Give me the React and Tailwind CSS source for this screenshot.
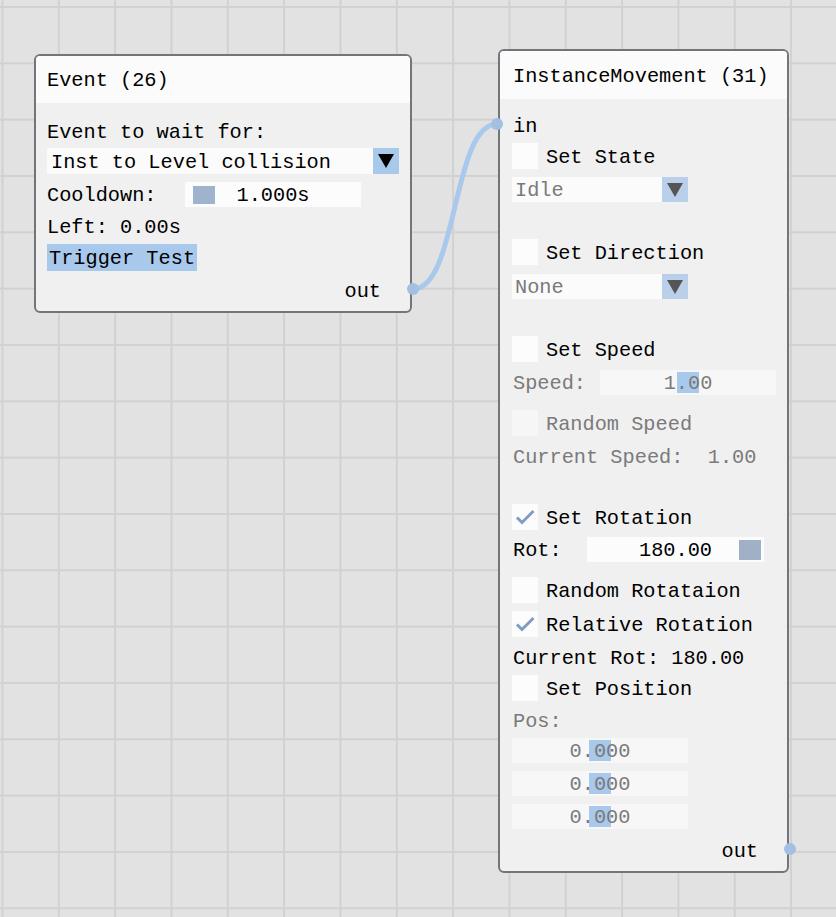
import React from 'react';

const GRAY = 'text-[#7a7a7a]';
// nudges Liberation Mono down so the glyphs sit where the pixel font did
const T = 'pt-[4px]';

function Checkbox({ checked, disabled, label }) {
    return (
        <div className="flex h-[26px] items-center gap-[8px]">
            <div className={`flex h-[26px] w-[26px] items-center justify-center ${disabled ? 'bg-[#f6f6f6]' : 'bg-[#fcfcfc]'}`}>
                {checked && (
                    <svg width="26" height="26" viewBox="0 0 26 26">
                        <path d="M5 13.5 L10 18.5 L21.5 7" fill="none" stroke="#7f9cc3" strokeWidth="3" strokeLinejoin="miter" />
                    </svg>
                )}
            </div>
            <span className={`${T} ${disabled ? GRAY : 'text-black'}`}>{label}</span>
        </div>
    );
}

function Combo({ value, width, disabled }) {
    return (
        <div className={`flex h-[25px] bg-[#fbfbfb] ${width}`}>
            <div className={`flex flex-1 items-center pl-[3px] ${T} ${disabled ? GRAY : 'text-black'}`}>{value}</div>
            <div className={`flex w-[26px] items-center justify-center ${disabled ? 'bg-[#b9cfea]' : 'bg-[#a9c9ec]'}`}>
                <svg width="16" height="14" viewBox="0 0 16 14">
                    <path d="M0 0 H16 L8 14 Z" fill={disabled ? '#555' : '#000'} />
                </svg>
            </div>
        </div>
    );
}

function Slider({ value, grab, width, disabled }) {
    // grab: 'left' | 'center' | 'right'
    const grabPos = grab === 'left' ? 'left-[8px] top-[4px] h-[18px] bg-[#9fb3cd]'
        : grab === 'right' ? 'right-[3px] top-[3px] h-[20px] bg-[#a0b1c7]'
        : 'left-[77px] top-[2px] h-[21px] bg-[#a9c9ec]';
    return (
        <div className={`relative flex h-[25px] items-center justify-center ${disabled ? 'bg-[#f7f7f7]' : 'bg-[#fcfcfc]'} ${width}`}>
            <div className={`absolute w-[22px] ${grabPos}`} />
            <span className={`relative ${T} ${disabled ? GRAY : 'text-black'}`}>{value}</span>
        </div>
    );
}

function Header({ title, h }) {
    return <div className={`flex items-center bg-[#fbfbfb] pl-[11px] ${T} ${h}`}>{title}</div>;
}

function EventNode() {
    return (
        <div className="absolute left-[34px] top-[54px] h-[259px] w-[378px] overflow-hidden rounded-[6px] border-2 border-[#73757b] bg-[#f0f0f0]">
            <Header title="Event (26)" h="h-[47px]" />
            <div className="flex flex-col px-[11px]">
                <div className={`mt-[19px] flex h-[18px] items-center ${T}`}>Event to wait for:</div>
                <div className="mt-[8px] flex h-[26px] bg-[#fbfbfb]">
                    <div className={`flex flex-1 items-center pl-[4px] ${T}`}>Inst to Level collision</div>
                    <div className="flex w-[26px] items-center justify-center bg-[#a9c9ec]">
                        <svg width="16" height="14" viewBox="0 0 16 14">
                            <path d="M0 0 H16 L8 14 Z" fill="#000" />
                        </svg>
                    </div>
                </div>
                <div className="mt-[8px] flex h-[25px] items-center">
                    <span className={`w-[138px] ${T}`}>Cooldown:</span>
                    <Slider value="1.000s" grab="left" width="w-[176px]" />
                </div>
                <div className={`mt-[10px] flex h-[18px] items-center ${T}`}>Left: 0.00s</div>
                <div className={`mt-[9px] flex h-[27px] items-center self-start bg-[#a9c9ec] pl-[2px] pr-[2px] ${T}`}>Trigger Test</div>
                <div className={`mt-[10px] flex h-[18px] items-center justify-end pr-[18px] ${T}`}>out</div>
            </div>
        </div>
    );
}

function MovementNode() {
    return (
        <div className="absolute left-[498px] top-[49px] h-[824px] w-[291px] overflow-hidden rounded-[6px] border-2 border-[#73757b] bg-[#f0f0f0]">
            <Header title="InstanceMovement (31)" h="h-[48px] pl-[13px]" />
            <div className="flex flex-col pl-[12px] pr-[11px]">
                <div className={`mt-[17px] flex h-[18px] items-center pl-[1px] ${T}`}>in</div>
                <div className="mt-[9px]"><Checkbox label="Set State" /></div>
                <div className="mt-[8px]"><Combo value="Idle" width="w-[176px]" disabled /></div>
                <div className="mt-[37px]"><Checkbox label="Set Direction" /></div>
                <div className="mt-[9px]"><Combo value="None" width="w-[176px]" disabled /></div>
                <div className="mt-[37px]"><Checkbox label="Set Speed" /></div>
                <div className="mt-[8px] flex h-[25px] items-center">
                    <span className={`w-[88px] pl-[1px] ${T} ${GRAY}`}>Speed:</span>
                    <Slider value="1.00" grab="center" width="w-[176px]" disabled />
                </div>
                <div className="mt-[15px]"><Checkbox label="Random Speed" disabled /></div>
                <div className={`mt-[11px] flex h-[18px] items-center whitespace-pre pl-[1px] ${T} ${GRAY}`}>Current Speed:  1.00</div>
                <div className="mt-[39px]"><Checkbox label="Set Rotation" checked /></div>
                <div className="mt-[7px] flex h-[25px] items-center">
                    <span className={`w-[75px] pl-[1px] ${T}`}>Rot:</span>
                    <Slider value="180.00" grab="right" width="w-[177px]" />
                </div>
                <div className="mt-[15px]"><Checkbox label="Random Rotataion" /></div>
                <div className="mt-[8px]"><Checkbox label="Relative Rotation" checked /></div>
                <div className={`mt-[11px] flex h-[18px] items-center pl-[1px] ${T}`}>Current Rot: 180.00</div>
                <div className="mt-[9px]"><Checkbox label="Set Position" /></div>
                <div className={`mt-[10px] flex h-[18px] items-center pl-[1px] ${T} ${GRAY}`}>Pos:</div>
                <div className="mt-[9px]"><Slider value="0.000" grab="center" width="w-[176px]" disabled /></div>
                <div className="mt-[8px]"><Slider value="0.000" grab="center" width="w-[176px]" disabled /></div>
                <div className="mt-[8px]"><Slider value="0.000" grab="center" width="w-[176px]" disabled /></div>
                <div className={`mt-[12px] flex h-[18px] items-center justify-end pr-[18px] ${T}`}>out</div>
            </div>
        </div>
    );
}

export default function App() {
    return (
        <div className="relative h-[917px] w-full overflow-hidden bg-[#e2e2e2] bg-[linear-gradient(to_right,#d1d1d1_2px,transparent_2px),linear-gradient(to_bottom,#d1d1d1_2px,transparent_2px)] bg-[size:56.33px_56.33px] bg-[position:1.5px_6px] font-['Liberation_Mono',monospace] text-[20.3px] leading-none text-black">
            <EventNode />
            <MovementNode />
            <svg className="pointer-events-none absolute left-0 top-0" width="836" height="917">
                <path d="M413 289 C 458 289, 452 124, 497 124" fill="none" stroke="#a9c9ec" strokeWidth="5" />
                <circle cx="413" cy="289" r="6" fill="#a3bfe2" />
                <circle cx="497" cy="124" r="6" fill="#a3bfe2" />
                <circle cx="790" cy="849" r="6" fill="#a3bfe2" />
            </svg>
        </div>
    );
}
